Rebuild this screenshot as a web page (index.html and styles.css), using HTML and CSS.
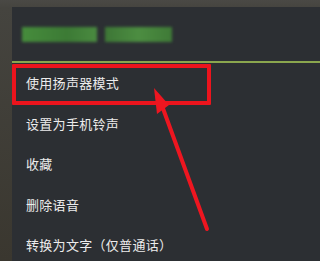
FILE: index.html
```html
<!DOCTYPE html>
<html lang="zh">
<head>
<meta charset="utf-8">
<link rel="stylesheet" href="styles.css">
</head>
<body>
<div class="screen">
  <div class="panel">
    <div class="header">
      <span class="blur b1"></span>
      <span class="blur b2"></span>
    </div>
    <div class="divider"></div>
    <ul class="menu">
      <li class="item">使用扬声器模式</li>
      <li class="item">设置为手机铃声</li>
      <li class="item">收藏</li>
      <li class="item">删除语音</li>
      <li class="item">转换为文字（仅普通话）</li>
    </ul>
  </div>
  <div class="highlight"></div>
  <svg class="arrow" width="250" height="261" viewBox="0 0 250 261">
    <line x1="161" y1="103" x2="207" y2="229" stroke="#ee1620" stroke-width="4" stroke-linecap="round"/>
    <polygon points="154,88 169,105 157,114" fill="#ee1620"/>
  </svg>
</div>
</body>
</html>
```
FILE: styles.css
```css
html, body {
  margin: 0;
  padding: 0;
  background: #3c3a34;
}
body {
  min-width: 250px;
  height: 261px;
  overflow: hidden;
  font-family: "Noto Sans CJK SC", "Noto Sans", sans-serif;
}
.screen {
  position: relative;
  width: 100%;
  height: 261px;
  padding: 7px 0 0 12px;
  box-sizing: border-box;
  background: linear-gradient(180deg, #4a4945 0, #45443f 8px, #3a372f 100%);
}
.panel {
  background: #2c2f33;
  height: 254px;
  display: flex;
  flex-direction: column;
}
.header {
  height: 54px;
  flex: none;
  display: flex;
  align-items: center;
  gap: 8px;
  padding-left: 10px;
  box-sizing: border-box;
}
.blur {
  display: block;
  height: 15px;
  filter: blur(1.5px);
}
.b1 { width: 75px; background: linear-gradient(90deg, #468c3c, #3c7a35 60%, #4a8a40); }
.b2 { width: 67px; background: linear-gradient(90deg, #3d7636, #4c8d41 50%, #3f7a37); }
.divider {
  height: 2px;
  flex: none;
  background: #8aa64e;
}
.menu {
  list-style: none;
  margin: 0;
  padding: 0;
}
.item {
  height: 40.5px;
  line-height: 40.5px;
  padding-left: 14px;
  color: #ececec;
  font-size: 13px;
  letter-spacing: 0.3px;
  white-space: nowrap;
}
.highlight {
  position: absolute;
  left: 12px;
  top: 64px;
  width: 191px;
  height: 33px;
  border: 4px solid #ec141d;
  border-radius: 1px;
}
.arrow {
  position: absolute;
  left: 0;
  top: 0;
}
```
